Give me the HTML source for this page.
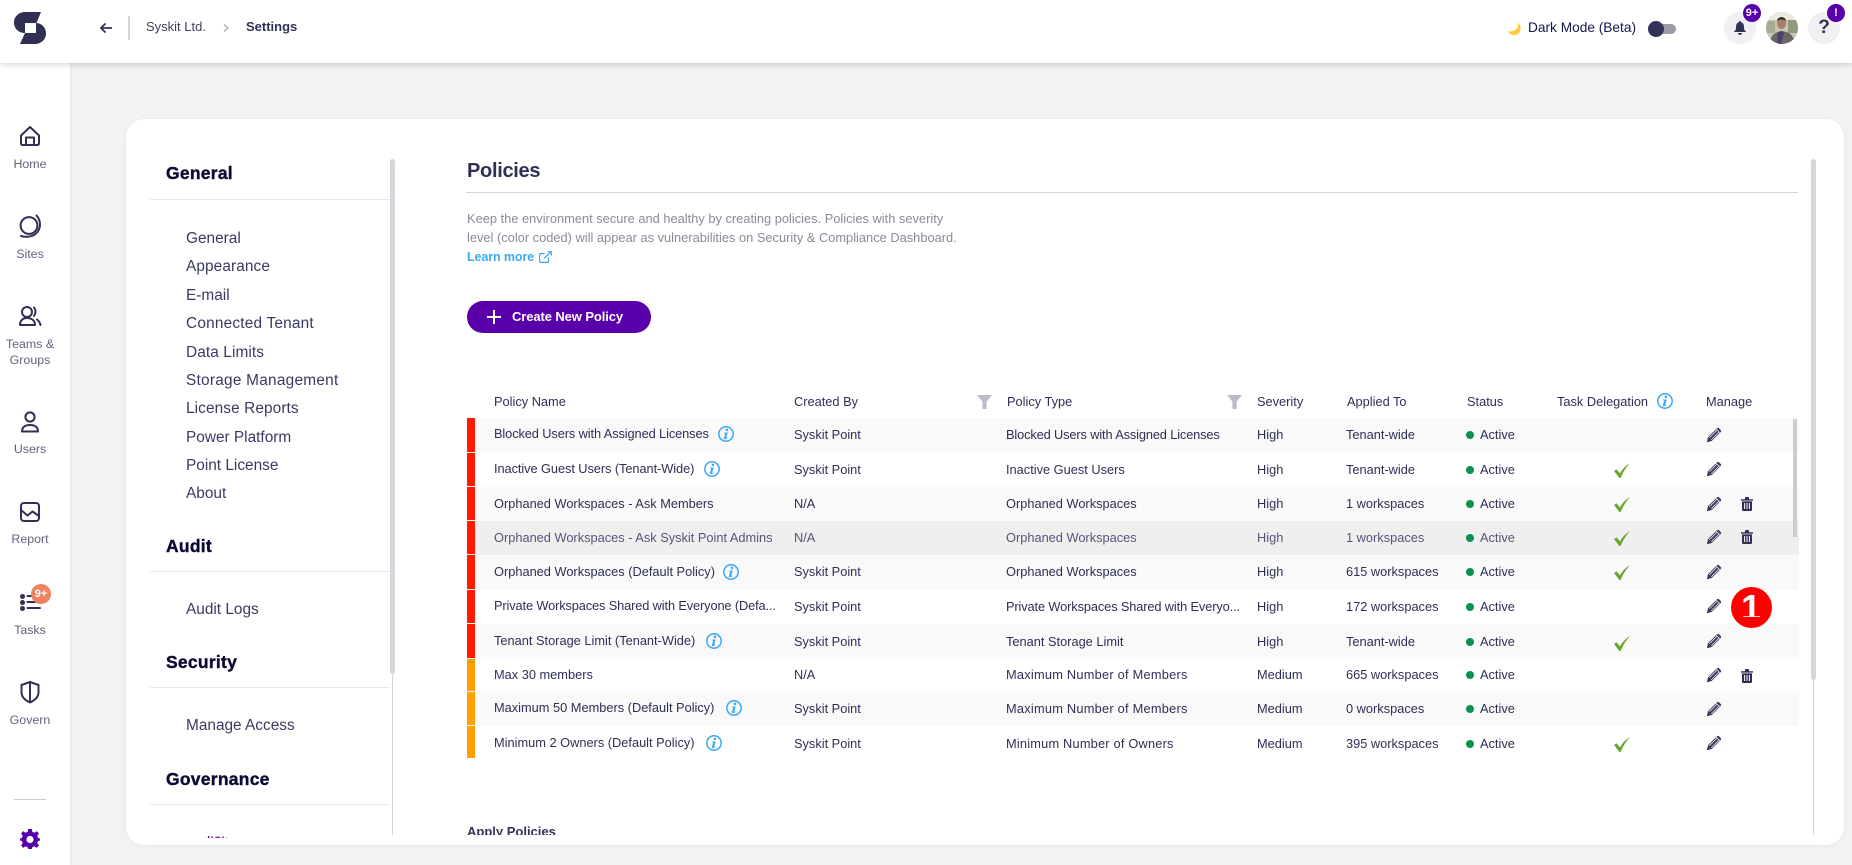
<!DOCTYPE html>
<html lang="en"><head><meta charset="utf-8"><title>Settings - Policies</title>
<style>
*{box-sizing:border-box}
html,body{margin:0;padding:0;width:1852px;height:865px;overflow:hidden;background:#f2f2f2;font-family:"Liberation Sans",sans-serif;color:#2f2f55}
.a{position:absolute}
.t{position:absolute;white-space:nowrap;line-height:20px;height:20px}
#top{position:absolute;left:0;top:0;width:1852px;height:63px;background:#fff;box-shadow:0 1px 6px rgba(0,0,0,.2);z-index:5}
#side{position:absolute;left:0;top:0;width:70px;height:865px;background:#fff;box-shadow:1px 0 2px rgba(0,0,0,.06)}
#side .l{position:absolute;left:0;width:60px;text-align:center;font-size:12.4px;line-height:16px;color:#62627f}
#card{position:absolute;left:126px;top:119px;width:1718px;height:726px;background:#fff;border-radius:18px;box-shadow:0 1px 6px rgba(0,0,0,.05)}
#nav .h{position:absolute;left:166px;font-weight:bold;font-size:17.5px;letter-spacing:.25px;line-height:22px;color:#0c0a35;white-space:nowrap;-webkit-text-stroke:.4px #0c0a35}
#nav .i{position:absolute;left:186px;font-size:15.4px;line-height:20px;color:#3a3a60;white-space:nowrap}
#nav .ln{position:absolute;left:150px;width:240px;height:1px;background:#e8e8ec}
.hd{font-size:12.8px;color:#2f2f55}
.bg{position:absolute;left:467px;width:1332px}
.bar{position:absolute;left:467px;width:8px}
.row{position:absolute;left:0;width:1852px;height:20px;font-size:12.8px;line-height:20px;color:#2f2f55}
.row span{position:absolute;white-space:nowrap}
.n{left:494px}.c{left:794px}.p{left:1006px}.s{left:1257px}.ap{left:1346px}.st{left:1480px}
.row i{position:absolute;left:1466px;top:6px;width:8px;height:8px;border-radius:50%;background:#0a9150}
.ic{position:absolute}
.nm{margin-top:-1px}
</style></head><body>
<svg width="0" height="0" style="position:absolute">
<defs>
<symbol id="pen" viewBox="0 0 16 16"><path d="M.8 15.2 2 10.3 10.9 1.4Q12 .4 13.1 1.4L14.6 2.9Q15.6 4 14.6 5.1L5.7 14Z" fill="#3a3a5c"/><path d="M3.3 10.7 10.8 3.2M5.3 12.7 12.8 5.2M10.3 2.2 13.8 5.7" stroke="#fff" stroke-width=".7" fill="none"/></symbol>
<symbol id="tr" viewBox="0 0 12 14"><path d="M0 2.2H4V.8Q4 0 4.8 0H7.2Q8 0 8 .8V2.2H12V3.6H0ZM1 4.4H11V12.6Q11 14 9.6 14H2.4Q1 14 1 12.6Z" fill="#2f2f55"/><path d="M3.6 6V12M6 6V12M8.4 6V12" stroke="#fff" stroke-width="1"/></symbol>
<symbol id="chk" viewBox="0 0 16 15"><path d="M0 8 2.6 6.4 6 10.4C8 6.5 11.5 2.8 16 0 12.5 4 9 9 6.6 15L5.4 15Z" fill="#6aa62f"/></symbol>
<symbol id="inf" viewBox="0 0 16 16"><circle cx="8" cy="8" r="7.2" fill="none" stroke="#3ea8f0" stroke-width="1.5"/><path d="M9 2.6a1.3 1.3 0 1 1-.1 0ZM6.300 6.500H9.800L8.100 11.800 9.500 11.300 9.300 12.400 6.500 13.200 5.700 12.600 7.200 7.600 6.100 7.400Z" fill="#3ea8f0"/></symbol>
<symbol id="fil" viewBox="0 0 15 14"><path d="M0 0H15L9.6 6.6V14H5.4V6.6Z" fill="#bcbcc8"/></symbol>
</defs></svg>

<div id="side">
<svg class="ic" style="left:0;top:0" width="70" height="865" fill="none" stroke="#2f3054" stroke-width="2" stroke-linejoin="round" stroke-linecap="round">
<path d="M21 135.500 30 127 39 135.500V143Q39 145 37 145H23Q21 145 21 143ZM26 145V137.500H34V145"/>
<circle cx="29" cy="225.500" r="8.400"/><path d="M36.500 215.500C41.500 221 41 229 36 233.500 32 237 26 237.500 21 236"/>
<circle cx="27" cy="312" r="5"/><path d="M20 325C20 319.500 24 318 27 318 31 318 35 320 35 325ZM34 307.500C36 310 36 313 34 316M37 319.500C39 321 40 323 40.500 325"/>
<circle cx="30" cy="417" r="4.600"/><path d="M22 431.500C22 426.500 26 425 30 425 34 425 38 426.500 38 431.500Z"/>
<rect x="21" y="503" width="18" height="18" rx="3"/><path d="M21 510 27.500 515.500 32.500 511.500 39 516"/>
<path d="M27.500 596H40M27.500 602H40M27.500 608H40"/>
<path d="M30 682 38.500 685V692C38.500 697 34.500 700.500 30 702.500 25.500 700.500 21.500 697 21.500 692V685ZM30 682V702"/>
</svg>
<svg class="ic" style="left:20px;top:829px" width="20" height="20" viewBox="0 0 20 20"><path d="M8.200 0H11.800L12.300 2.800 14.500 3.700 16.800 2.100 19 4.600 17.300 6.800 18.100 9 20 9.500V11.500L18.100 12 17.300 14.200 19 16.400 16.800 18.900 14.500 17.300 12.300 18.200 11.800 20H8.200L7.700 18.200 5.500 17.300 3.200 18.900 1 16.400 2.700 14.200 1.900 12 0 11.500V9.500L1.900 9 2.700 6.800 1 4.600 3.200 2.100 5.500 3.700 7.700 2.800Z" fill="#5900ab"/><circle cx="10" cy="10.500" r="3.600" fill="#fff"/></svg>
<div class="a" style="left:20px;top:593.500px;width:5px;height:5px;border-radius:50%;background:#2f3054"></div>
<div class="a" style="left:20px;top:599.500px;width:5px;height:5px;border-radius:50%;background:#2f3054"></div>
<div class="a" style="left:20px;top:605.500px;width:5px;height:5px;border-radius:50%;background:#2f3054"></div>
<div class="a" style="left:31px;top:584px;width:20px;height:20px;border-radius:50%;background:#f08260;color:#fff;font-size:11px;font-weight:bold;text-align:center;line-height:20px">9+</div>
<div class="l" style="top:155.500px">Home</div>
<div class="l" style="top:246px">Sites</div>
<div class="l" style="top:335.500px">Teams &amp;</div>
<div class="l" style="top:351.500px">Groups</div>
<div class="l" style="top:441px">Users</div>
<div class="l" style="top:531px">Report</div>
<div class="l" style="top:621.500px">Tasks</div>
<div class="l" style="top:711.500px">Govern</div>
<div class="a" style="left:14px;top:799px;width:32px;height:1px;background:#ccc"></div>
</div>

<div id="top">
<svg class="ic" style="left:0;top:0" width="60" height="60"><path d="M25 12H41L36.500 23H25V33C18.500 33 14 28.500 14 22.500 14 16.500 19 12 25 12ZM36 23C42 23 46 28 46 33.500 46 39.500 41 44 35 44H20L25 33H36Z" fill="#2f3054"/></svg>
<svg class="ic" style="left:98px;top:20px" width="16" height="16" fill="none" stroke="#2f3054" stroke-width="1.800"><path d="M3 8H14M7.500 3.500 3 8 7.500 12.500"/></svg>
<div class="a" style="left:128px;top:16px;width:2px;height:24px;background:#d5d5dc"></div>
<div class="t" style="left:146px;top:17px;font-size:13px;color:#3f3f60">Syskit Ltd.</div>
<svg class="ic" style="left:222px;top:22px" width="8" height="12" fill="none" stroke="#a9a9b8" stroke-width="1.200"><path d="M2 2.500 6 6 2 9.500"/></svg>
<div class="t" style="left:246px;top:17px;font-size:13px;font-weight:bold;color:#2f3054">Settings</div>
<svg class="ic" style="left:1507px;top:22px" width="15" height="14"><path d="M11 0.500C12 5 10 9.500 1 9.500 3 13 8 14 11 12 14.500 9.500 14.500 3.500 11 0.500Z" fill="#ffc83d"/></svg>
<div class="t" style="left:1528px;top:18px;font-size:13.700px;color:#16164a">Dark Mode (Beta)</div>
<div class="a" style="left:1652px;top:24px;width:24px;height:10px;border-radius:5px;background:#9a9aa8"></div>
<div class="a" style="left:1648px;top:21px;width:16px;height:16px;border-radius:50%;background:#33335a"></div>
<div class="a" style="left:1724px;top:12px;width:32px;height:32px;border-radius:50%;background:#f0f0f2"></div>
<svg class="ic" style="left:1733px;top:21px" width="14" height="14"><path d="M7 0Q8 0 8 1.200C10.500 1.800 11 3.800 11 6.500 11 8.800 12 10 13.200 11H.8C2 10 3 8.800 3 6.500 3 3.800 3.500 1.800 6 1.200 6 0 6.500 0 7 0ZM5 12H9Q8.500 14 7 14 5.500 14 5 12Z" fill="#33335a"/></svg>
<div class="a" style="left:1743px;top:4px;width:18px;height:18px;border-radius:50%;background:#5900ab;color:#fff;font-size:11px;font-weight:bold;text-align:center;line-height:18px">9+</div>
<svg class="ic" style="left:1766px;top:12px" width="32" height="32" viewBox="0 0 32 32"><defs><clipPath id="av"><circle cx="16" cy="16" r="16"/></clipPath></defs><g clip-path="url(#av)"><rect width="32" height="32" fill="#c8c6b4"/><rect x="0" y="0" width="32" height="8" fill="#ece9df"/><rect x="22" y="8" width="10" height="13" fill="#8f9a80"/><rect x="0" y="9" width="9" height="12" fill="#a9ab95"/><path d="M4 32C4 23 9 20 16 19 23 20 28 23 29 32Z" fill="#6a6664"/><path d="M12 20 16 19 18 21 15 32H11Z" fill="#4f3d6c"/><ellipse cx="15.500" cy="11" rx="4.500" ry="6" fill="#a87f65"/><path d="M11 9C11 4 20 4 20 9 18 7 13 7 11 9Z" fill="#2b2320"/></g></svg>
<div class="a" style="left:1808px;top:12px;width:32px;height:32px;border-radius:50%;background:#f0f0f2;color:#33335a;font-size:19px;font-weight:bold;text-align:center;line-height:32px">?</div>
<div class="a" style="left:1827px;top:4px;width:18px;height:18px;border-radius:50%;background:#5900ab;color:#fff;font-size:11px;font-weight:bold;text-align:center;line-height:18px">!</div>
</div>

<div id="card"></div>

<div id="nav">
<div class="h" style="top:162px">General</div><div class="ln" style="top:199px"></div>
<div class="i" style="top:229px">General</div>
<div class="i" style="top:257px;letter-spacing:.1px">Appearance</div>
<div class="i" style="top:286px">E-mail</div>
<div class="i" style="top:314px;letter-spacing:.2px">Connected Tenant</div>
<div class="i" style="top:343px;letter-spacing:.1px">Data Limits</div>
<div class="i" style="top:371px;letter-spacing:.25px">Storage Management</div>
<div class="i" style="top:399px;letter-spacing:.1px">License Reports</div>
<div class="i" style="top:428px">Power Platform</div>
<div class="i" style="top:456px">Point License</div>
<div class="i" style="top:484px">About</div>
<div class="h" style="top:535px">Audit</div><div class="ln" style="top:571px"></div>
<div class="i" style="top:600px">Audit Logs</div>
<div class="h" style="top:651px">Security</div><div class="ln" style="top:687px"></div>
<div class="i" style="top:716px">Manage Access</div>
<div class="h" style="top:768px">Governance</div><div class="ln" style="top:804px"></div>
<div class="a" style="left:205px;top:836px;width:22px;height:2px;overflow:hidden"><div class="i" style="left:-17px;top:-5px;color:#5900ab">Policies</div></div>
<div class="a" style="left:390px;top:159px;width:5px;height:515px;border-radius:3px;background:#d5d5dc"></div>
<div class="a" style="left:392px;top:674px;width:1px;height:161px;background:#d5d5dc"></div>
</div>

<div class="t" style="left:467px;top:161px;font-size:20px;font-weight:bold;color:#2f3054;letter-spacing:-.3px">Policies</div>
<div class="a" style="left:466px;top:192px;width:1332px;height:1px;background:#d5d5dc"></div>
<div class="t" style="left:467px;top:209px;font-size:12.850px;color:#8a8a99">Keep the environment secure and healthy by creating policies. Policies with severity</div>
<div class="t" style="left:467px;top:228px;font-size:12.850px;color:#8a8a99">level (color coded) will appear as vulnerabilities on Security &amp; Compliance Dashboard.</div>
<div class="t" style="left:467px;top:247px;font-size:12.500px;font-weight:bold;color:#3ea8f0;letter-spacing:-.1px">Learn more</div>
<svg class="ic" style="left:539px;top:251px" width="13" height="12" fill="none" stroke="#3ea8f0" stroke-width="1.200"><path d="M9.500 6.500V10.500Q9.500 11.400 8.600 11.400H1.500Q.6 11.400.6 10.500V3.500Q.6 2.600 1.500 2.600H5.500M5 7.500 12 .8M8.500.7H12.300V4.500"/></svg>
<div class="a" style="left:467px;top:301px;width:184px;height:32px;border-radius:16px;background:#5900ab"></div>
<svg class="ic" style="left:487px;top:310px" width="14" height="14" stroke="#fff" stroke-width="2"><path d="M7 0V14M0 7H14"/></svg>
<div class="t" style="left:512px;top:307px;font-size:13px;font-weight:bold;color:#fff;letter-spacing:-.1px">Create New Policy</div>

<div class="t hd" style="left:494px;top:392px">Policy Name</div>
<div class="t hd" style="left:794px;top:392px">Created By</div>
<svg class="ic" style="left:977px;top:395px" width="15" height="14"><use href="#fil"/></svg>
<div class="t hd" style="left:1007px;top:392px">Policy Type</div>
<svg class="ic" style="left:1227px;top:395px" width="15" height="14"><use href="#fil"/></svg>
<div class="t hd" style="left:1257px;top:392px">Severity</div>
<div class="t hd" style="left:1347px;top:392px">Applied To</div>
<div class="t hd" style="left:1467px;top:392px">Status</div>
<div class="t hd" style="left:1557px;top:392px">Task Delegation</div>
<svg class="ic" style="left:1657px;top:393px" width="16" height="16"><use href="#inf"/></svg>
<div class="t hd" style="left:1706px;top:392px">Manage</div>

<div class="bg" style="top:418px;height:34px;background:#f9f9f9"></div>
<div class="bg" style="top:487px;height:34px;background:#f9f9f9"></div>
<div class="bg" style="top:521px;height:34px;background:#efefef"></div>
<div class="bg" style="top:555px;height:35px;background:#f9f9f9"></div>
<div class="bg" style="top:624px;height:35px;background:#f9f9f9"></div>
<div class="bg" style="top:691px;height:35px;background:#f9f9f9"></div>

<div class="bar" style="top:418px;height:34px;background:#ff1a00"></div>
<div class="bar" style="top:453px;height:33px;background:#ff1a00"></div>
<div class="bar" style="top:487px;height:33px;background:#ff1a00"></div>
<div class="bar" style="top:521px;height:33px;background:#ff1a00"></div>
<div class="bar" style="top:555px;height:34px;background:#ff1a00"></div>
<div class="bar" style="top:590px;height:33px;background:#ff1a00"></div>
<div class="bar" style="top:624px;height:34px;background:#ff1a00"></div>
<div class="bar" style="top:659px;height:32px;background:#ffa000"></div>
<div class="bar" style="top:692px;height:33px;background:#ffa000"></div>
<div class="bar" style="top:726px;height:32px;background:#ffa000"></div>

<div class="row" style="top:425px"><span class="n nm" style="letter-spacing:-.1px">Blocked Users with Assigned Licenses</span><span class="c">Syskit Point</span><span class="p" style="letter-spacing:-.13px">Blocked Users with Assigned Licenses</span><span class="s">High</span><span class="ap">Tenant-wide</span><i></i><span class="st">Active</span></div>
<div class="row" style="top:460px"><span class="n nm" style="letter-spacing:-.07px">Inactive Guest Users (Tenant-Wide)</span><span class="c">Syskit Point</span><span class="p">Inactive Guest Users</span><span class="s">High</span><span class="ap">Tenant-wide</span><i></i><span class="st">Active</span></div>
<div class="row" style="top:494px"><span class="n">Orphaned Workspaces - Ask Members</span><span class="c">N/A</span><span class="p">Orphaned Workspaces</span><span class="s">High</span><span class="ap">1 workspaces</span><i></i><span class="st">Active</span></div>
<div class="row" style="top:528px;color:#55557a"><span class="n">Orphaned Workspaces - Ask Syskit Point Admins</span><span class="c">N/A</span><span class="p">Orphaned Workspaces</span><span class="s">High</span><span class="ap">1 workspaces</span><i></i><span class="st">Active</span></div>
<div class="row" style="top:562px"><span class="n">Orphaned Workspaces (Default Policy)</span><span class="c">Syskit Point</span><span class="p">Orphaned Workspaces</span><span class="s">High</span><span class="ap">615 workspaces</span><i></i><span class="st">Active</span></div>
<div class="row" style="top:597px"><span class="n nm" style="letter-spacing:-.125px">Private Workspaces Shared with Everyone (Defa...</span><span class="c">Syskit Point</span><span class="p" style="letter-spacing:-.12px">Private Workspaces Shared with Everyo...</span><span class="s">High</span><span class="ap">172 workspaces</span><i></i><span class="st">Active</span></div>
<div class="row" style="top:632px"><span class="n nm">Tenant Storage Limit (Tenant-Wide)</span><span class="c">Syskit Point</span><span class="p">Tenant Storage Limit</span><span class="s">High</span><span class="ap">Tenant-wide</span><i></i><span class="st">Active</span></div>
<div class="row" style="top:665px"><span class="n">Max 30 members</span><span class="c">N/A</span><span class="p" style="letter-spacing:.24px">Maximum Number of Members</span><span class="s">Medium</span><span class="ap">665 workspaces</span><i></i><span class="st">Active</span></div>
<div class="row" style="top:699px"><span class="n nm">Maximum 50 Members (Default Policy)</span><span class="c">Syskit Point</span><span class="p" style="letter-spacing:.24px">Maximum Number of Members</span><span class="s">Medium</span><span class="ap">0 workspaces</span><i></i><span class="st">Active</span></div>
<div class="row" style="top:734px"><span class="n nm">Minimum 2 Owners (Default Policy)</span><span class="c">Syskit Point</span><span class="p" style="letter-spacing:.2px">Minimum Number of Owners</span><span class="s">Medium</span><span class="ap">395 workspaces</span><i></i><span class="st">Active</span></div>

<svg class="ic" style="left:718px;top:426px" width="16" height="16"><use href="#inf"/></svg>
<svg class="ic" style="left:704px;top:461px" width="16" height="16"><use href="#inf"/></svg>
<svg class="ic" style="left:723px;top:564px" width="16" height="16"><use href="#inf"/></svg>
<svg class="ic" style="left:706px;top:633px" width="16" height="16"><use href="#inf"/></svg>
<svg class="ic" style="left:726px;top:700px" width="16" height="16"><use href="#inf"/></svg>
<svg class="ic" style="left:706px;top:735px" width="16" height="16"><use href="#inf"/></svg>

<svg class="ic" style="left:1614px;top:463px" width="16" height="15"><use href="#chk"/></svg>
<svg class="ic" style="left:1614px;top:497px" width="16" height="15"><use href="#chk"/></svg>
<svg class="ic" style="left:1614px;top:531px" width="16" height="15"><use href="#chk"/></svg>
<svg class="ic" style="left:1614px;top:565px" width="16" height="15"><use href="#chk"/></svg>
<svg class="ic" style="left:1614px;top:636px" width="16" height="15"><use href="#chk"/></svg>
<svg class="ic" style="left:1614px;top:737px" width="16" height="15"><use href="#chk"/></svg>

<svg class="ic" style="left:1706px;top:427px" width="16" height="16"><use href="#pen"/></svg>
<svg class="ic" style="left:1706px;top:461px" width="16" height="16"><use href="#pen"/></svg>
<svg class="ic" style="left:1706px;top:496px" width="16" height="16"><use href="#pen"/></svg>
<svg class="ic" style="left:1706px;top:529px" width="16" height="16"><use href="#pen"/></svg>
<svg class="ic" style="left:1706px;top:564px" width="16" height="16"><use href="#pen"/></svg>
<svg class="ic" style="left:1706px;top:598px" width="16" height="16"><use href="#pen"/></svg>
<svg class="ic" style="left:1706px;top:633px" width="16" height="16"><use href="#pen"/></svg>
<svg class="ic" style="left:1706px;top:667px" width="16" height="16"><use href="#pen"/></svg>
<svg class="ic" style="left:1706px;top:701px" width="16" height="16"><use href="#pen"/></svg>
<svg class="ic" style="left:1706px;top:735px" width="16" height="16"><use href="#pen"/></svg>

<svg class="ic" style="left:1741px;top:497px" width="12" height="14"><use href="#tr"/></svg>
<svg class="ic" style="left:1741px;top:530px" width="12" height="14"><use href="#tr"/></svg>
<svg class="ic" style="left:1741px;top:669px" width="12" height="14"><use href="#tr"/></svg>

<div class="a" style="left:1793px;top:419px;width:4px;height:118px;background:#ccc"></div>
<div class="a" style="left:1811px;top:159px;width:5px;height:521px;border-radius:3px;background:#d5d5dc"></div>
<div class="a" style="left:1813px;top:680px;width:1px;height:155px;background:#d5d5dc"></div>
<div class="a" style="left:1730.500px;top:586.500px;width:41px;height:41px;border-radius:50%;background:#ff0000">
<div class="a" style="left:0;top:3.500px;width:41px;height:27px;overflow:hidden"><div class="a" style="left:0;top:-3px;width:41px;height:41px;color:#fff;font-size:36px;font-weight:bold;text-align:center;line-height:41px">1</div></div>
</div>

<div class="a" style="left:466px;top:822px;width:200px;height:13px;overflow:hidden"><div class="t" style="left:1px;top:0;font-size:13px;font-weight:bold;color:#33335a;line-height:20px">Apply Policies</div></div>
</body></html>
